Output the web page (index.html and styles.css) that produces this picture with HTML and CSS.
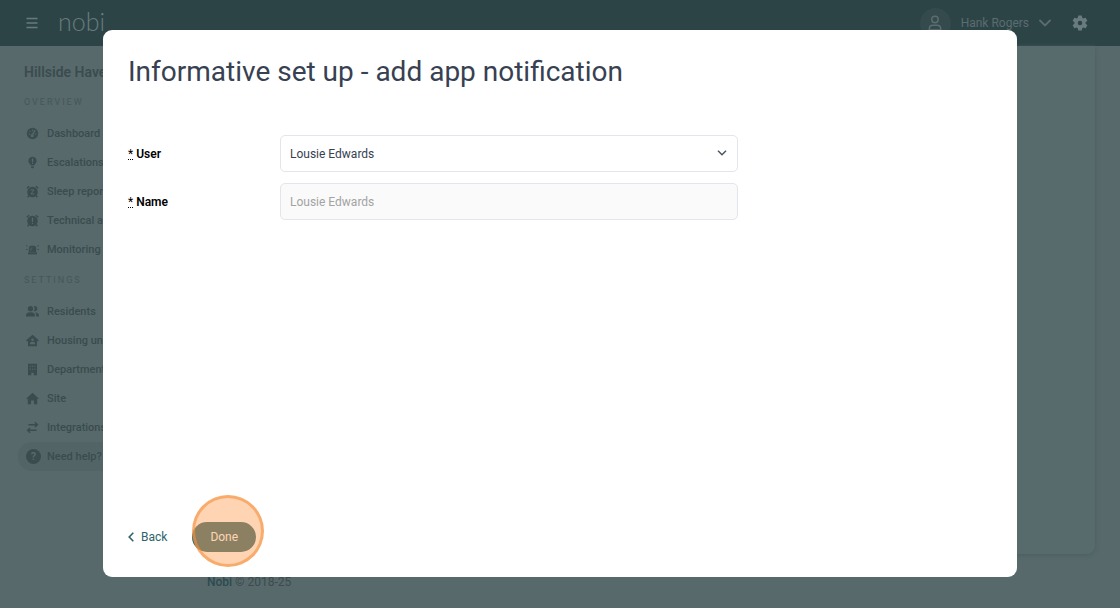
FILE: index.html
```html
<!DOCTYPE html>
<html lang="en">
<head>
  <meta charset="utf-8">
  <title>Nobi</title>
  <meta name="viewport" content="width=device-width, initial-scale=1.0">
  <link rel="stylesheet" href="styles.css">
</head>
<body>
  <header class="topbar">
    <button class="icon-btn menu-btn" type="button" aria-label="Menu">
      <svg width="12" height="12" viewBox="0 0 12 12" fill="none" stroke="currentColor" stroke-width="1.6"><path d="M.5 1.500h11M.5 6h11M.5 10.500h11"/></svg>
    </button>
    <a class="logo" href="#">nobi</a>
    <button class="icon-btn user-menu" type="button">
      <span class="avatar">
        <svg width="14" height="16" viewBox="0 0 16 18" fill="none" stroke="currentColor" stroke-width="1.7"><circle cx="8" cy="5" r="3.700"/><path d="M1.500 17v-1.500c0-2.500 1.500-4 4-4h5c2.500 0 4 1.500 4 4v1.500z" stroke-linejoin="round"/></svg>
      </span>
      <span>Hank Rogers</span>
      <svg class="chevron" width="12" height="8" viewBox="0 0 12 8" fill="none" stroke="currentColor" stroke-width="1.800" stroke-linecap="round"><path d="M1 1.500l5 5 5-5"/></svg>
    </button>
    <button class="icon-btn" type="button" aria-label="Settings">
      <svg width="18" height="18" viewBox="0 0 24 24" fill="currentColor"><path d="M19.430 12.980c.04-.32.07-.64.07-.98s-.03-.66-.07-.98l2.110-1.650c.19-.15.24-.42.12-.64l-2-3.460c-.12-.22-.39-.3-.61-.22l-2.490 1c-.52-.4-1.080-.73-1.690-.98l-.38-2.650A.488.488 0 0 0 14 2h-4c-.25 0-.46.18-.49.42l-.38 2.650c-.61.25-1.170.59-1.690.98l-2.490-1c-.23-.09-.49 0-.61.22l-2 3.460c-.13.22-.07.49.12.64l2.110 1.650c-.04.32-.07.65-.07.98s.03.66.07.98l-2.110 1.650c-.19.15-.24.42-.12.64l2 3.460c.12.22.39.3.61.22l2.490-1c.52.4 1.080.73 1.690.98l.38 2.650c.03.24.24.42.49.42h4c.25 0 .46-.18.49-.42l.38-2.650c.61-.25 1.170-.59 1.690-.98l2.490 1c.23.09.49 0 .61-.22l2-3.460c.12-.22.07-.49-.12-.64zM12 15a3 3 0 1 1 0-6 3 3 0 0 1 0 6z"/></svg>
    </button>
  </header>

  <div class="page">
    <nav class="sidebar">
      <h2 class="site-name">Hillside Haven</h2>
      <h3 class="nav-title">Overview</h3>
      <ul class="nav-list">
        <li><a href="#">
          <svg viewBox="0 0 16 16"><circle cx="8" cy="8" r="7" fill="currentColor"/><g class="cut"><path d="M10.800 4.500L8 9.500"/><circle cx="7.600" cy="10.500" r="1.200"/><path d="M4 8.500h.1M5 5.300h.1M8 4h.1M12 8.500h.1"/></g></svg>
          Dashboard</a></li>
        <li><a href="#">
          <svg viewBox="0 0 16 16" fill="currentColor"><path d="M8 1a5 5 0 0 0-3 9c.6.500 1 1 1 1.800h4c0-.8.4-1.300 1-1.800a5 5 0 0 0-3-9z"/><path d="M6.200 12.800h3.600v1c0 .8-.8 1.400-1.800 1.400s-1.800-.6-1.800-1.400z"/><path class="cut" d="M8 3.500v3.500M8 9v.1"/></svg>
          Escalations</a></li>
        <li><a href="#">
          <svg viewBox="0 0 16 16" fill="currentColor"><circle cx="8" cy="8.500" r="6.500"/><path class="line" d="M1 4l3-2.500M15 4l-3-2.500M3.500 13L2 15M12.500 13L14 15"/><path class="cut thin" d="M6.200 6h3.600l-3.600 5h3.600"/></svg>
          Sleep reports</a></li>
        <li><a href="#">
          <svg viewBox="0 0 16 16" fill="currentColor"><circle cx="8" cy="8.500" r="6.500"/><path class="line" d="M1 4l3-2.500M15 4l-3-2.500M3.500 13L2 15M12.500 13L14 15"/><path class="cut" d="M8 5v4M8 11.500v.1"/></svg>
          Technical alerts</a></li>
        <li><a href="#">
          <svg viewBox="0 0 16 16" fill="currentColor"><path d="M3.500 11V6.500a3 3 0 0 1 3-3h3a3 3 0 0 1 3 3V11z"/><path d="M2.500 11.500h11V14h-11z"/><path class="thin" d="M0 3l2 1M16 3l-2 1M0 8h2M16 8h-2"/><path class="thin cut" d="M6 9V7.500C6 6.500 6.500 6 7.500 6"/></svg>
          Monitoring units</a></li>
      </ul>
      <h3 class="nav-title">Settings</h3>
      <ul class="nav-list">
        <li><a href="#">
          <svg viewBox="0 0 16 16" fill="currentColor"><circle cx="5.500" cy="4.500" r="3.200"/><path d="M0 14v-1.500C0 10.300 2 9 5.500 9s5.500 1.300 5.500 3.500V14z"/><path d="M9.500 1.600a3.200 3.200 0 1 1 0 5.800 4.500 4.500 0 0 0 0-5.800zM11.500 9.200c2.700.3 4.500 1.500 4.500 3.300V14h-3.500v-1.500c0-1.400-.3-2.400-1-3.300z"/></svg>
          Residents</a></li>
        <li><a href="#">
          <svg viewBox="0 0 16 16" fill="currentColor"><path d="M8 .8L.5 7.500V9H2.500v6h11V9h2V7.500z"/><circle class="hole" cx="8" cy="7" r="1.600"/><path class="hole" d="M4.800 12.500c0-2 1.200-3 3.200-3s3.200 1 3.200 3z"/></svg>
          Housing units</a></li>
        <li><a href="#">
          <svg viewBox="0 0 16 16" fill="currentColor"><path d="M2.500 1h11v14H9.500v-3h-3v3h-4z"/><path class="cut" d="M5.200 4v.1M8 4v.1M10.800 4v.1M5.200 7.500v.1M8 7.500v.1M10.800 7.500v.1"/></svg>
          Departments</a></li>
        <li><a href="#">
          <svg viewBox="0 0 16 16" fill="currentColor"><path d="M8 1L0 8.300h2.200V15h4v-4.500h3.600V15h4V8.300H16z"/></svg>
          Site</a></li>
        <li><a href="#">
          <svg viewBox="0 0 16 16"><path class="line" d="M3 4.500h11M11 1.500l3 3-3 3M13 11.500H2M5 8.500l-3 3 3 3"/></svg>
          Integrations</a></li>
        <li><a class="help" href="#"><span class="help-mark">?</span>Need help?</a></li>
      </ul>
    </nav>
    <div class="content">
      <main class="panel"></main>
      <footer class="footer"><b>Nobi</b> © 2018-25</footer>
    </div>
  </div>

  <div class="overlay">
    <form class="modal" role="dialog" aria-labelledby="modal-title">
      <h1 class="modal-title" id="modal-title">Informative set up - add app notification</h1>
      <div class="field">
        <label for="user"><abbr title="required">*</abbr> User</label>
        <div class="select-wrap">
          <select class="control" id="user">
            <option>Lousie Edwards</option>
          </select>
          <svg class="select-arrow" width="10" height="6" viewBox="0 0 10 6" fill="none" stroke="currentColor" stroke-width="1.500"><path d="M1 .8l4 4 4-4"/></svg>
        </div>
      </div>
      <div class="field">
        <label for="name"><abbr title="required">*</abbr> Name</label>
        <input class="control" id="name" type="text" value="Lousie Edwards" disabled>
      </div>
      <div class="actions">
        <a class="back" href="#">
          <svg width="6" height="10" viewBox="0 0 6 10" fill="none" stroke="currentColor" stroke-width="1.600"><path d="M5.300 .7L1.200 5l4.100 4.300"/></svg>
          Back
        </a>
        <div class="done-wrap">
          <button class="done" type="button">Done</button>
          <span class="click-ring"></span>
        </div>
      </div>
    </form>
  </div>
</body>
</html>
```
FILE: styles.css
```css
* {
  margin: 0;
  padding: 0;
  box-sizing: border-box;
}

body {
  font-family: Roboto, "Noto Sans", sans-serif;
  font-size: 12px;
  line-height: 16px;
  min-height: 100vh;
  background: #57696b;
  color: #3b4c4e;
  display: flex;
  flex-direction: column;
  overflow: hidden;
}

a {
  color: inherit;
  text-decoration: none;
}

button,
input,
select {
  font: inherit;
  color: inherit;
}

/* top bar */
.topbar {
  height: 46px;
  background: #2d4447;
  color: #687b7d;
  display: flex;
  align-items: center;
  gap: 20px;
  padding: 0 31px 0 26px;
}

.icon-btn {
  background: none;
  border: 0;
  display: flex;
  align-items: center;
}

.logo {
  font-family: Lato, sans-serif;
  font-weight: 300;
  font-size: 25px;
  line-height: 32px;
  padding-bottom: 5px;
}

.user-menu {
  margin-left: auto;
  gap: 10px;
  color: #5a6d6f;
}

.avatar {
  width: 31px;
  height: 31px;
  border-radius: 50%;
  background: #344a4d;
  display: flex;
  align-items: center;
  justify-content: center;
}

/* page behind the dialog */
.page {
  flex: 1;
  display: flex;
}

.sidebar {
  width: 190px;
  padding: 16px 16px 0 18px;
  white-space: nowrap;
}

.site-name {
  font-size: 14px;
  font-weight: 600;
  line-height: 20px;
  padding-left: 6px;
}

.nav-title {
  font-size: 9px;
  font-weight: 400;
  letter-spacing: 2px;
  line-height: 16px;
  text-transform: uppercase;
  color: #455759;
  padding: 12px 0 9px 6px;
}

.nav-list + .nav-title {
  padding-top: 8px;
}

.nav-list {
  list-style: none;
}

.nav-list a {
  display: flex;
  align-items: center;
  gap: 8px;
  height: 29px;
  padding-left: 8px;
  border-radius: 14px;
  font-size: 11px;
  font-weight: 500;
}

.nav-list svg {
  width: 13px;
  height: 13px;
}

.nav-list .help {
  gap: 6px;
  background: #526466;
}

.help-mark {
  width: 15px;
  height: 15px;
  border-radius: 50%;
  background: #3b4c4e;
  color: #57696b;
  font-weight: 700;
  line-height: 15px;
  text-align: center;
}

.line,
.thin {
  fill: none;
  stroke: currentColor;
  stroke-width: 1.8;
}

.cut {
  fill: none;
  stroke: #57696b;
  stroke-width: 1.6;
  stroke-linecap: round;
}

.thin {
  stroke-width: 1.2;
}

.hole {
  fill: #57696b;
}

.content {
  flex: 1;
  display: flex;
  flex-direction: column;
  padding: 0 25px 18px 17px;
}

.panel {
  flex: 1;
  background: #586b6c;
  border-radius: 0 0 8px 8px;
  box-shadow: 0 1px 4px #4c5e60;
}

.footer {
  padding-top: 20px;
}

.footer b {
  font-weight: 500;
  color: #2d4b4e;
}

/* dialog */
.overlay {
  position: fixed;
  inset: 0;
  display: flex;
  justify-content: center;
  padding: 30px 30px 31px;
}

.modal {
  width: 914px;
  background: #fff;
  border-radius: 9px;
  padding: 25px;
  display: flex;
  flex-direction: column;
  gap: 11px;
}

.modal-title {
  font-size: 28px;
  font-weight: 400;
  line-height: 34px;
  color: #374151;
  margin-bottom: 35px;
}

.field {
  display: grid;
  grid-template-columns: 152px minmax(0, 458px);
  align-items: center;
}

.field label {
  font-weight: 600;
  color: #000;
}

.field abbr {
  font-weight: 400;
}

.select-wrap {
  position: relative;
}

.control {
  display: block;
  width: 100%;
  height: 37px;
  border: 1px solid #e2e5ec;
  border-radius: 5px;
  background: #fff;
  color: #374151;
  padding: 0 9px;
  appearance: none;
}

.control:disabled {
  background: #fafafa;
  color: #a3a3a3;
  opacity: 1;
}

.select-arrow {
  position: absolute;
  right: 11px;
  top: 15px;
  color: #4b5563;
}

.actions {
  margin-top: auto;
  display: flex;
  align-items: center;
  gap: 25px;
  color: #2c6469;
}

.back {
  display: flex;
  align-items: center;
  gap: 7px;
}

.done-wrap {
  position: relative;
}

.done {
  display: block;
  height: 30px;
  padding: 0 18px;
  border: 0;
  border-radius: 15px;
  background: #2c6469;
  color: #fff;
}

/* click marker over the button */
.click-ring {
  position: absolute;
  left: 0;
  top: -27px;
  width: 72px;
  height: 72px;
  border: 3px solid rgba(243, 145, 60, 0.6);
  border-radius: 50%;
  background: rgba(255, 161, 90, 0.46);
}
```
